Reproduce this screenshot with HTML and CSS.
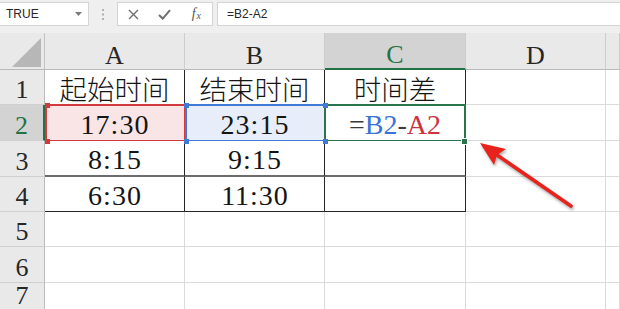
FILE: index.html
```html
<!DOCTYPE html>
<html lang="zh-CN">
<head>
<meta charset="utf-8">
<title>时间差</title>
<link rel="stylesheet" href="styles.css">
</head>
<body>
<div class="toolbar">
  <div class="namebox">
    <span>TRUE</span>
    <svg class="caret" width="7" height="4" viewBox="0 0 7 4"><path d="M0 0h7L3.5 4z" fill="#7a7a7a"/></svg>
  </div>
  <div class="grip">
    <svg width="2" height="11" viewBox="0 0 2 11"><rect x="0" y="0" width="2" height="2" fill="#b0b0b0"/><rect x="0" y="4.5" width="2" height="2" fill="#b0b0b0"/><rect x="0" y="9" width="2" height="2" fill="#b0b0b0"/></svg>
  </div>
  <div class="fxbox">
    <div class="btn"><svg width="11" height="11" viewBox="0 0 11 11"><path d="M1 1L10 10M10 1L1 10" stroke="#6f6f6f" stroke-width="1.4" fill="none"/></svg></div>
    <div class="btn"><svg width="13" height="11" viewBox="0 0 13 11"><path d="M1 6L4.8 9.6L12 1.2" stroke="#6f6f6f" stroke-width="2" fill="none"/></svg></div>
    <div class="btn fx"><i>f</i><i class="x">x</i></div>
  </div>
  <div class="formula">=B2-A2</div>
</div>

<div class="sheet">
  <div class="corner"><div class="tri"></div></div>
  <div class="colh">A</div>
  <div class="colh">B</div>
  <div class="colh on">C</div>
  <div class="colh">D</div>
  <div class="colh"></div>

  <div class="rowh">1</div>
  <div class="cell t cjk">起始时间</div>
  <div class="cell t cjk">结束时间</div>
  <div class="cell t cjk">时间差</div>
  <div class="cell"></div>
  <div class="cell"></div>

  <div class="rowh on">2</div>
  <div class="cell t sel red num">17:30</div>
  <div class="cell t sel blue num">23:15</div>
  <div class="cell t sel green"><span class="op">=</span><span class="rb">B2</span><span class="op">-</span><span class="ra">A2</span></div>
  <div class="cell"></div>
  <div class="cell"></div>

  <div class="rowh">3</div>
  <div class="cell t thick num">8:15</div>
  <div class="cell t thick num">9:15</div>
  <div class="cell t thick"></div>
  <div class="cell"></div>
  <div class="cell"></div>

  <div class="rowh">4</div>
  <div class="cell t num">6:30</div>
  <div class="cell t num">11:30</div>
  <div class="cell t"></div>
  <div class="cell"></div>
  <div class="cell"></div>

  <div class="rowh">5</div>
  <div class="cell"></div>
  <div class="cell"></div>
  <div class="cell"></div>
  <div class="cell"></div>
  <div class="cell"></div>

  <div class="rowh">6</div>
  <div class="cell"></div>
  <div class="cell"></div>
  <div class="cell"></div>
  <div class="cell"></div>
  <div class="cell"></div>

  <div class="rowh">7</div>
  <div class="cell"></div>
  <div class="cell"></div>
  <div class="cell"></div>
  <div class="cell"></div>
  <div class="cell"></div>
</div>

<svg class="arrow" width="620" height="309" viewBox="0 0 620 309">
  <g class="arrow-shape">
    <path d="M571 206L497 155" stroke="#e8231c" stroke-width="3.6" stroke-linecap="round" fill="none"/>
    <path d="M480 143L506 149L497 155L494 165Z" fill="#e8231c"/>
  </g>
</svg>
</body>
</html>
```
FILE: styles.css
```css
* { box-sizing: border-box; margin: 0; padding: 0; }
body {
  margin: 0;
  width: 620px;
  height: 309px;
  overflow: hidden;
  background: #ffffff;
  font-family: "Liberation Sans", "Noto Sans CJK SC", sans-serif;
  position: relative;
}

/* formula bar */
.toolbar {
  height: 33px;
  background: #efefef;
  display: flex;
  align-items: flex-start;
  padding-top: 2px;
}
.namebox {
  width: 89px;
  height: 24px;
  background: #fff;
  border: 1px solid #d4d4d4;
  border-left: none;
  display: flex;
  align-items: center;
  justify-content: space-between;
  padding: 0 6px 0 6px;
  font-size: 12px;
  color: #262626;
}
.grip {
  width: 28px;
  height: 24px;
  display: flex;
  align-items: center;
  justify-content: center;
}
.fxbox {
  width: 96px;
  height: 24px;
  background: #fff;
  border: 1px solid #d4d4d4;
  display: flex;
}
.fxbox .btn {
  flex: 1;
  display: flex;
  align-items: center;
  justify-content: center;
}
.fx {
  font-family: "Liberation Serif", serif;
  color: #555;
  font-size: 14px;
}
.fx .x { font-size: 10px; margin-left: 1px; margin-top: 3px; }
.formula {
  flex: 1;
  margin-left: 4px;
  height: 24px;
  background: #fff;
  border: 1px solid #d4d4d4;
  border-right: none;
  padding-left: 9px;
  font-size: 12px;
  line-height: 22px;
  color: #262626;
}

/* sheet grid */
.sheet {
  display: grid;
  grid-template-columns: 45px 140px 140px 141px 140px 1fr;
  grid-template-rows: 37px 35px 36px 36px 35px 35px 36px;
}
.sheet > * {
  border-right: 1px solid #dadada;
  border-bottom: 1px solid #dadada;
  position: relative;
}
.corner {
  background: #e9e9e9;
  border-right-color: #c2c2c2;
  border-bottom-color: #b9b9b9;
  display: flex;
  align-items: flex-end;
  justify-content: flex-end;
  padding: 0 3px 2px 0;
}
.tri {
  width: 29px;
  height: 29px;
  background: #b7b7b7;
  clip-path: polygon(100% 0, 100% 100%, 0 100%);
}
.colh, .rowh {
  background: #e9e9e9;
  font-family: "Liberation Serif", serif;
  font-size: 26px;
  line-height: 26px;
  color: #262626;
  display: flex;
  justify-content: center;
  align-items: flex-end;
}
.colh {
  border-right-color: #cdcdcd;
  border-bottom-color: #b9b9b9;
}
.rowh {
  border-right-color: #bcbcbc;
  border-bottom-color: #d0d0d0;
  padding-bottom: 1px;
}
.colh.on {
  background: #d3d3d3;
  color: #217346;
  border-bottom: 2px solid #217346;
}
.rowh.on {
  background: #d3d3d3;
  color: #217346;
  border-right: 2px solid #217346;
}

.cell {
  font-family: "Liberation Serif", "Noto Sans CJK SC", serif;
  font-size: 28px;
  line-height: 30px;
  color: #151515;
  display: flex;
  justify-content: center;
  align-items: flex-end;
  background: #fff;
}
.num { letter-spacing: 1px; padding-left: 1px; }
.cjk { font-size: 27.5px; line-height: 26px; font-weight: 300; }
.t {
  border-right-color: #262626;
  border-bottom-color: #262626;
}
.thick { border-bottom: 2px solid #6c6c6c; }

/* selection frames */
.sel::after {
  content: "";
  position: absolute;
  top: -1px;
  left: 0;
  right: -2px;
  bottom: -2px;
  border: 2px solid var(--c);
}
.sel::before {
  content: "";
  position: absolute;
  z-index: 2;
  width: 5px;
  height: 5px;
  left: -1px;
  top: -2px;
  background: var(--c);
  box-shadow: 139px 0 var(--c), 0 36px var(--c), 139px 36px var(--c);
}
.red { --c: #d23a3e; background: #f9e5e5; }
.red::before { left: 0; }
.blue { --c: #3f7bd6; background: #e7eef9; }
.green { --c: #2a7549; }
.green::after { left: -1px; right: -1px; }
.green::before {
  left: 137px;
  top: 34px;
  box-shadow: none;
  outline: 1px solid #fff;
}
.op { color: #3a3a3a; }
.rb { color: #3a72d6; }
.ra { color: #cc3341; }

/* annotation arrow */
.arrow {
  position: absolute;
  left: 0;
  top: 0;
  pointer-events: none;
}
.arrow-shape { filter: drop-shadow(1px 2px 1.5px rgba(0,0,0,0.35)); }
```
